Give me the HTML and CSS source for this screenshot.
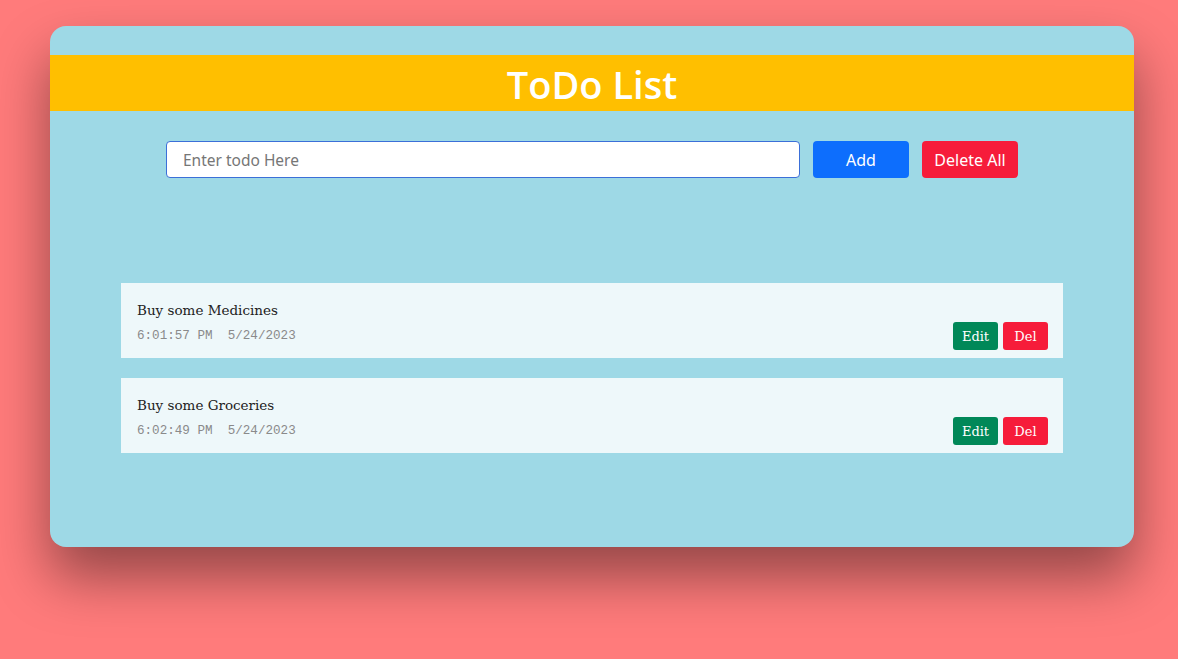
FILE: index.html
```html
<!DOCTYPE html>
<html>
<head>
<meta charset="utf-8">
<link rel="stylesheet" href="styles.css">
</head>
<body>
<div class="card">
  <h1 class="header">ToDo List</h1>
  <div class="form-row">
    <input class="todo-input" type="text" placeholder="Enter todo Here">
    <button class="btn btn-add">Add</button>
    <button class="btn btn-del-all">Delete All</button>
  </div>
  <div class="list">
    <div class="item">
      <div class="item-text">
        <div class="title">Buy some Medicines</div>
        <div class="time">6:01:57 PM  5/24/2023</div>
      </div>
      <div class="actions">
        <button class="sbtn sbtn-edit">Edit</button>
        <button class="sbtn sbtn-del">Del</button>
      </div>
    </div>
    <div class="item">
      <div class="item-text">
        <div class="title">Buy some Groceries</div>
        <div class="time">6:02:49 PM  5/24/2023</div>
      </div>
      <div class="actions">
        <button class="sbtn sbtn-edit">Edit</button>
        <button class="sbtn sbtn-del">Del</button>
      </div>
    </div>
  </div>
</div>
</body>
</html>
```
FILE: styles.css
```css
html, body {
  margin: 0;
  padding: 0;
}
body {
  background: #ff7b7b;
  height: 659px;
  overflow: hidden;
  padding-top: 26px;
  box-sizing: border-box;
  font-family: "Noto Sans", "Open Sans", sans-serif;
}
.card {
  width: 1084px;
  height: 521px;
  margin-left: 50px;
  background: #9ed9e6;
  border-radius: 16px;
  box-shadow: 0 30px 55px rgba(0, 0, 0, 0.42);
  padding-top: 29px;
  box-sizing: border-box;
}
.header {
  margin: 0;
  height: 56px;
  background: #ffbf00;
  color: #ffffff;
  text-align: center;
  font-family: "Open Sans", "Noto Sans", sans-serif;
  font-size: 38px;
  font-weight: 600;
  line-height: 58px;
}
.form-row {
  display: flex;
  justify-content: center;
  gap: 13px;
  margin-top: 30px;
}
.todo-input {
  width: 634px;
  height: 37px;
  box-sizing: border-box;
  border: 1px solid #3b6fd8;
  border-radius: 4px;
  padding: 0 16px;
  font-family: "Noto Sans", sans-serif;
  font-size: 15.5px;
  color: #333;
  outline: none;
}
.todo-input::placeholder {
  color: #767676;
}
.btn {
  width: 96px;
  height: 37px;
  border: none;
  border-radius: 4px;
  color: #fff;
  font-family: "Noto Sans", sans-serif;
  font-size: 16px;
  padding: 0;
}
.btn-add { background: #0d6efd; }
.btn-del-all { background: #f61c3a; }
.list {
  display: flex;
  flex-direction: column;
  align-items: center;
  gap: 20px;
  margin-top: 105px;
}
.item {
  width: 942px;
  height: 75px;
  box-sizing: border-box;
  background: #eef8fa;
  display: flex;
  justify-content: space-between;
  align-items: flex-end;
  padding: 17px 15px 8px 16px;
}
.item-text {
  align-self: flex-start;
}
.title {
  font-family: "DejaVu Serif", serif;
  font-size: 13.5px;
  line-height: 20px;
  color: #222;
}
.time {
  font-family: "Liberation Mono", monospace;
  font-size: 12.6px;
  line-height: 16px;
  margin-top: 8px;
  color: #8a8a8a;
  white-space: pre;
}
.actions {
  display: flex;
  gap: 5px;
}
.sbtn {
  width: 45px;
  height: 28px;
  border: none;
  border-radius: 3px;
  color: #fff;
  font-family: "DejaVu Serif", serif;
  font-size: 13px;
  padding: 0;
}
.sbtn-edit { background: #008858; }
.sbtn-del { background: #f61c3a; }
```
